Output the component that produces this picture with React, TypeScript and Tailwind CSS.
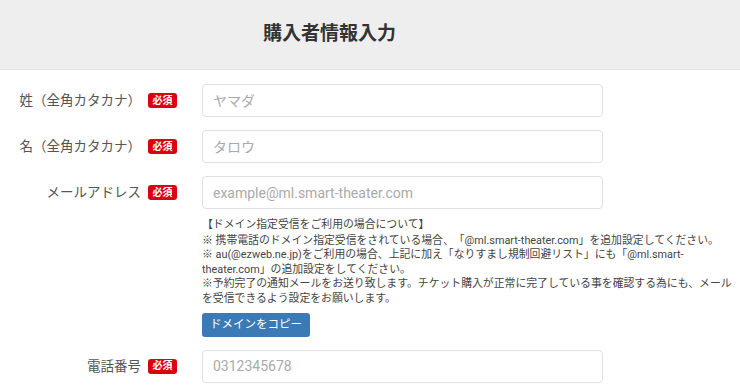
import React from 'react';

const font = { fontFamily: '"Roboto", "Noto Sans CJK JP", sans-serif' };

function Badge() {
  return (
    <span className="inline-flex h-[15px] w-[29px] items-center justify-center rounded-[3px] bg-[#d9000f] text-[10px] font-bold leading-none text-white">
      必須
    </span>
  );
}

function Row({ label, placeholder, children }: { label: string; placeholder: string; children?: React.ReactNode }) {
  return (
    <div className="flex items-start">
      <div className="flex h-[33px] w-[177px] shrink-0 items-center justify-end">
        <span className="mr-[7px] text-[13.5px] text-[#555]">{label}</span>
        <Badge />
      </div>
      <div className="ml-[25px] flex flex-col">
        <input
          className="h-[33px] w-[401px] rounded-[4px] border border-[#e0e0e0] bg-white px-[10px] text-[14px] text-[#333] outline-none placeholder:text-[#aaa]"
          placeholder={placeholder}
          style={font}
        />
        {children}
      </div>
    </div>
  );
}

export default function App() {
  return (
    <div className="min-h-screen bg-white [text-spacing-trim:space-all]" style={font}>
      <div className="flex h-[70px] items-center border-b border-[#e3e3e3] bg-[#eeeeee] pl-[263px]">
        <h1 className="text-[19px] font-bold text-[#333]">購入者情報入力</h1>
      </div>

      <div className="flex flex-col gap-[13px] pt-[14px]">
        <Row label="姓（全角カタカナ）" placeholder="ヤマダ" />
        <Row label="名（全角カタカナ）" placeholder="タロウ" />
        <Row label="メールアドレス" placeholder="example@ml.smart-theater.com">
          <div className="mt-[9px] w-[540px] text-[10.85px] leading-[14.6px] text-[#444]">
            <p className="mb-[1px] whitespace-nowrap">【ドメイン指定受信をご利用の場合について】</p>
            <p className="whitespace-nowrap">※ 携帯電話のドメイン指定受信をされている場合、「@ml.smart-theater.com」を追加設定してください。</p>
            <p className="whitespace-nowrap">※ au(@ezweb.ne.jp)をご利用の場合、上記に加え「なりすまし規制回避リスト」にも「@ml.smart-</p>
            <p className="whitespace-nowrap">theater.com」の追加設定をしてください。</p>
            <p className="whitespace-nowrap">※予約完了の通知メールをお送り致します。チケット購入が正常に完了している事を確認する為にも、メール</p>
            <p className="whitespace-nowrap">を受信できるよう設定をお願いします。</p>
          </div>
          <button className="mt-[6px] flex h-[24px] w-[108px] items-center justify-center rounded-[3px] bg-[#3c7ab6] text-[11.5px] text-white">
            ドメインをコピー
          </button>
        </Row>
        <Row label="電話番号" placeholder="0312345678" />
      </div>
    </div>
  );
}
